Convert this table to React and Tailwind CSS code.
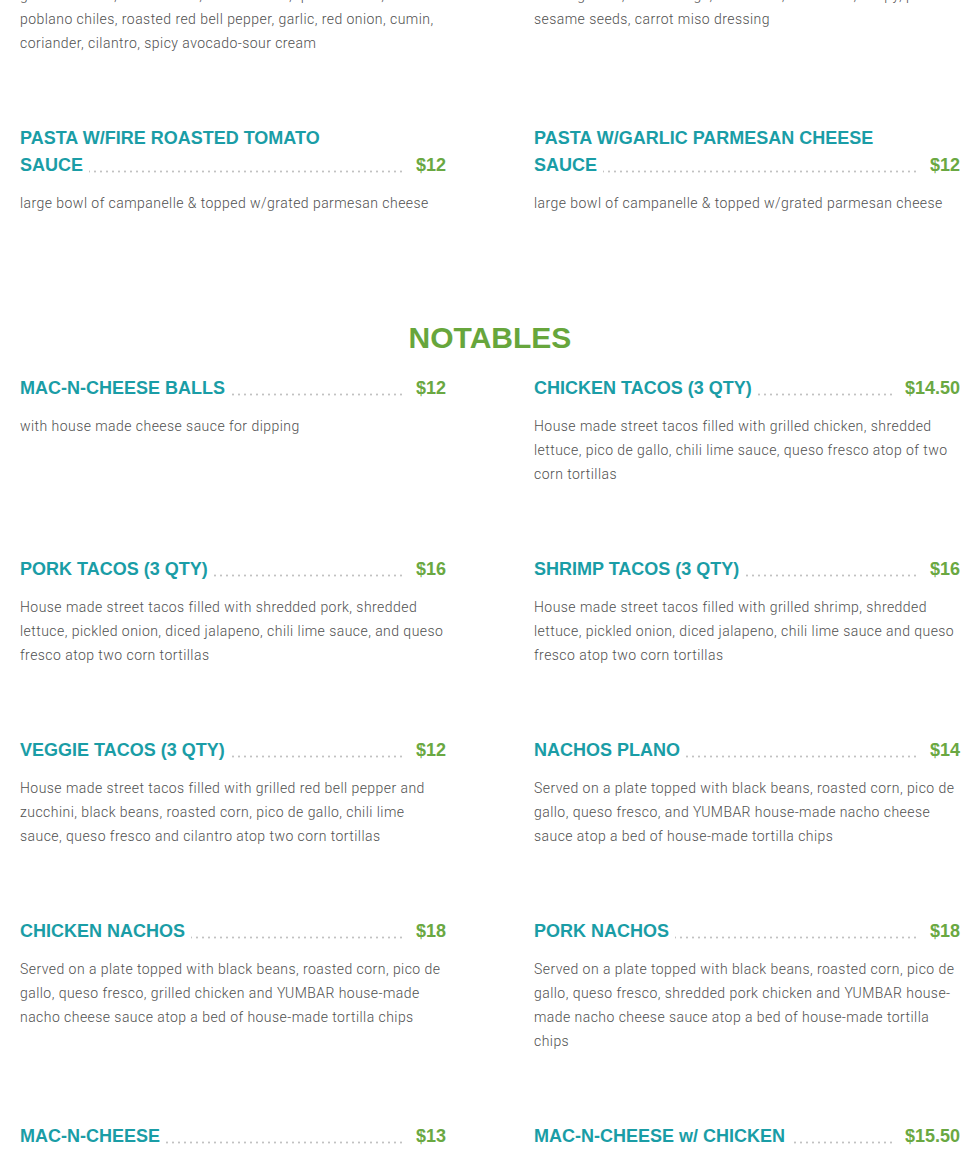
const TOP = [
  {
    lines: [
      'grilled chicken, black beans, roasted corn, queso fresco, charred',
      'poblano chiles, roasted red bell pepper, garlic, red onion, cumin,',
      'coriander, cilantro, spicy avocado-sour cream'
    ]
  },
  {
    lines: [
      'mixed greens, red cabbage, edamame, cucumber, crispy, pickled',
      'sesame seeds, carrot miso dressing'
    ]
  },
  {
    title: 'PASTA W/FIRE ROASTED TOMATO SAUCE',
    price: '$12',
    desc: 'large bowl of campanelle & topped w/grated parmesan cheese'
  },
  {
    title: 'PASTA W/GARLIC PARMESAN CHEESE SAUCE',
    price: '$12',
    desc: 'large bowl of campanelle & topped w/grated parmesan cheese'
  }
];

const NOTABLES = [
  { title: 'MAC-N-CHEESE BALLS', price: '$12', desc: 'with house made cheese sauce for dipping' },
  {
    title: 'CHICKEN TACOS (3 QTY)',
    price: '$14.50',
    desc: 'House made street tacos filled with grilled chicken, shredded lettuce, pico de gallo, chili lime sauce, queso fresco atop of two corn tortillas'
  },
  {
    title: 'PORK TACOS (3 QTY)',
    price: '$16',
    desc: 'House made street tacos filled with shredded pork, shredded lettuce, pickled onion, diced jalapeno, chili lime sauce, and queso fresco atop two corn tortillas'
  },
  {
    title: 'SHRIMP TACOS (3 QTY)',
    price: '$16',
    desc: 'House made street tacos filled with grilled shrimp, shredded lettuce, pickled onion, diced jalapeno, chili lime sauce and queso fresco atop two corn tortillas'
  },
  {
    title: 'VEGGIE TACOS (3 QTY)',
    price: '$12',
    desc: 'House made street tacos filled with grilled red bell pepper and zucchini, black beans, roasted corn, pico de gallo, chili lime sauce, queso fresco and cilantro atop two corn tortillas'
  },
  {
    title: 'NACHOS PLANO',
    price: '$14',
    desc: 'Served on a plate topped with black beans, roasted corn, pico de gallo, queso fresco, and YUMBAR house-made nacho cheese sauce atop a bed of house-made tortilla chips'
  },
  {
    title: 'CHICKEN NACHOS',
    price: '$18',
    desc: 'Served on a plate topped with black beans, roasted corn, pico de gallo, queso fresco, grilled chicken and YUMBAR house-made nacho cheese sauce atop a bed of house-made tortilla chips'
  },
  {
    title: 'PORK NACHOS',
    price: '$18',
    desc: 'Served on a plate topped with black beans, roasted corn, pico de gallo, queso fresco, shredded pork chicken and YUMBAR house-made nacho cheese sauce atop a bed of house-made tortilla chips'
  },
  { title: 'MAC-N-CHEESE', price: '$13', desc: 'creamy house made cheese sauce over campanelle pasta' },
  { title: 'MAC-N-CHEESE w/ CHICKEN', price: '$15.50', desc: 'creamy house made cheese sauce over campanelle pasta topped w/grilled chicken' }
];

export default function App() {
  return (
    <div className="h-[1154px] overflow-hidden bg-white">
      <div className="w-[940px] ml-5 -mt-[17px]">
        <div className="grid grid-cols-[426px_426px] gap-x-[88px] gap-y-[70px]">
          {TOP.map((item, i) => (
            <MenuItem key={i} item={item} />
          ))}
        </div>

        <h2 className="mt-[105px] mb-[19px] text-center text-[30px] leading-[36px] font-bold text-[#67a63c] font-['Liberation_Sans',Arial,sans-serif]">
          NOTABLES
        </h2>

        <div className="grid grid-cols-[426px_426px] gap-x-[88px] gap-y-[70px]">
          {NOTABLES.map((item, i) => (
            <MenuItem key={i} item={item} />
          ))}
        </div>
      </div>
    </div>
  );
}

function MenuItem({ item }) {
  return (
    <div>
      {item.title && (
        <div className="flex items-end justify-between mb-3 bg-[radial-gradient(circle,#c2c2c2_0.8px,transparent_1.3px)] bg-[length:6px_3px] bg-repeat-x bg-[position:0_calc(100%_-_6px)] font-['Liberation_Sans',Arial,sans-serif] font-bold text-[18px] leading-[27px]">
          <h3 className="max-w-[345px]">
            <span className="bg-white pr-[6px] text-[#1a9da6]">{item.title}</span>
          </h3>
          <span className="bg-white pl-[10px] text-[#6aa842]">{item.price}</span>
        </div>
      )}
      <p className="text-[14px] leading-[24px] text-[#505050] font-['Roboto',sans-serif] font-light tracking-[0.45px]">
        {item.lines
          ? item.lines.map((line, i) => (
              <span key={i} className="block whitespace-nowrap">
                {line}
              </span>
            ))
          : item.desc}
      </p>
    </div>
  );
}
